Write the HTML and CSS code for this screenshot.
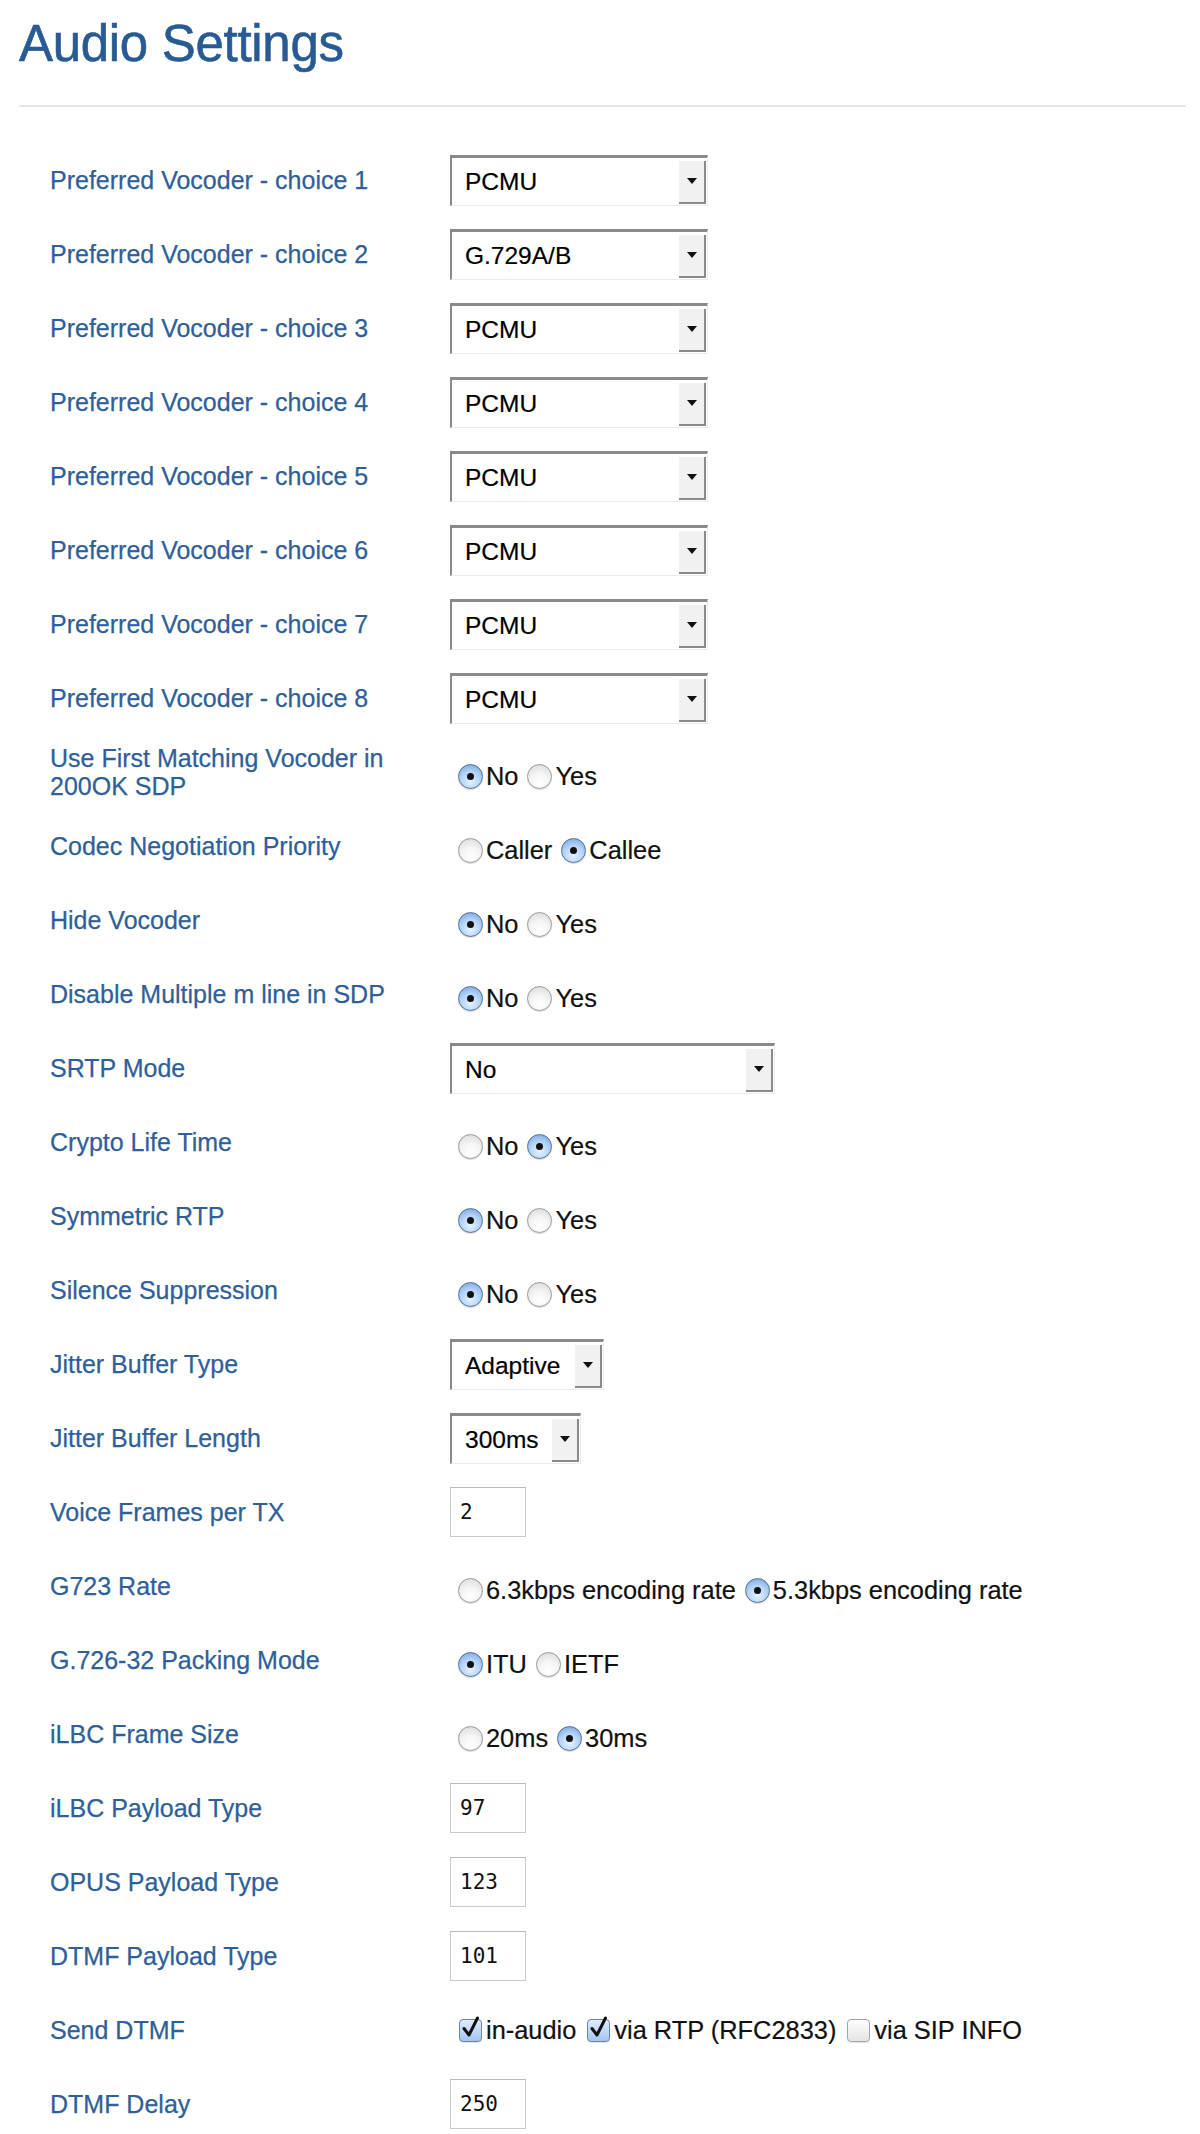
FILE: index.html
```html
<!DOCTYPE html>
<html>
<head>
<meta charset="utf-8">
<title>Audio Settings</title>
<link rel="stylesheet" href="styles.css">
</head>
<body>
<div class="page">
  <h1 class="title">Audio Settings</h1>
  <hr class="sep">
  <div class="form">
    <div class="row"><div class="lbl">Preferred Vocoder - choice 1</div><div class="ctl"><div class="sel w-voc"><span class="val">PCMU</span><span class="btn"><i class="arrow"></i></span></div></div></div>
    <div class="row"><div class="lbl">Preferred Vocoder - choice 2</div><div class="ctl"><div class="sel w-voc"><span class="val">G.729A/B</span><span class="btn"><i class="arrow"></i></span></div></div></div>
    <div class="row"><div class="lbl">Preferred Vocoder - choice 3</div><div class="ctl"><div class="sel w-voc"><span class="val">PCMU</span><span class="btn"><i class="arrow"></i></span></div></div></div>
    <div class="row"><div class="lbl">Preferred Vocoder - choice 4</div><div class="ctl"><div class="sel w-voc"><span class="val">PCMU</span><span class="btn"><i class="arrow"></i></span></div></div></div>
    <div class="row"><div class="lbl">Preferred Vocoder - choice 5</div><div class="ctl"><div class="sel w-voc"><span class="val">PCMU</span><span class="btn"><i class="arrow"></i></span></div></div></div>
    <div class="row"><div class="lbl">Preferred Vocoder - choice 6</div><div class="ctl"><div class="sel w-voc"><span class="val">PCMU</span><span class="btn"><i class="arrow"></i></span></div></div></div>
    <div class="row"><div class="lbl">Preferred Vocoder - choice 7</div><div class="ctl"><div class="sel w-voc"><span class="val">PCMU</span><span class="btn"><i class="arrow"></i></span></div></div></div>
    <div class="row"><div class="lbl">Preferred Vocoder - choice 8</div><div class="ctl"><div class="sel w-voc"><span class="val">PCMU</span><span class="btn"><i class="arrow"></i></span></div></div></div>

    <div class="row"><div class="lbl">Use First Matching Vocoder in 200OK SDP</div><div class="ctl"><div class="opts"><span class="opt"><span class="radio on"></span>No</span><span class="opt"><span class="radio"></span>Yes</span></div></div></div>
    <div class="row"><div class="lbl">Codec Negotiation Priority</div><div class="ctl"><div class="opts"><span class="opt"><span class="radio"></span>Caller</span><span class="opt"><span class="radio on"></span>Callee</span></div></div></div>
    <div class="row"><div class="lbl">Hide Vocoder</div><div class="ctl"><div class="opts"><span class="opt"><span class="radio on"></span>No</span><span class="opt"><span class="radio"></span>Yes</span></div></div></div>
    <div class="row"><div class="lbl">Disable Multiple m line in SDP</div><div class="ctl"><div class="opts"><span class="opt"><span class="radio on"></span>No</span><span class="opt"><span class="radio"></span>Yes</span></div></div></div>

    <div class="row"><div class="lbl">SRTP Mode</div><div class="ctl"><div class="sel w-srtp"><span class="val">No</span><span class="btn"><i class="arrow"></i></span></div></div></div>

    <div class="row"><div class="lbl">Crypto Life Time</div><div class="ctl"><div class="opts"><span class="opt"><span class="radio"></span>No</span><span class="opt"><span class="radio on"></span>Yes</span></div></div></div>
    <div class="row"><div class="lbl">Symmetric RTP</div><div class="ctl"><div class="opts"><span class="opt"><span class="radio on"></span>No</span><span class="opt"><span class="radio"></span>Yes</span></div></div></div>
    <div class="row"><div class="lbl">Silence Suppression</div><div class="ctl"><div class="opts"><span class="opt"><span class="radio on"></span>No</span><span class="opt"><span class="radio"></span>Yes</span></div></div></div>

    <div class="row"><div class="lbl">Jitter Buffer Type</div><div class="ctl"><div class="sel w-jt"><span class="val">Adaptive</span><span class="btn"><i class="arrow"></i></span></div></div></div>
    <div class="row"><div class="lbl">Jitter Buffer Length</div><div class="ctl"><div class="sel w-jl"><span class="val">300ms</span><span class="btn"><i class="arrow"></i></span></div></div></div>

    <div class="row"><div class="lbl">Voice Frames per TX</div><div class="ctl"><div class="inp">2</div></div></div>

    <div class="row"><div class="lbl">G723 Rate</div><div class="ctl"><div class="opts"><span class="opt"><span class="radio"></span>6.3kbps encoding rate</span><span class="opt"><span class="radio on"></span>5.3kbps encoding rate</span></div></div></div>
    <div class="row"><div class="lbl">G.726-32 Packing Mode</div><div class="ctl"><div class="opts"><span class="opt"><span class="radio on"></span>ITU</span><span class="opt"><span class="radio"></span>IETF</span></div></div></div>
    <div class="row"><div class="lbl">iLBC Frame Size</div><div class="ctl"><div class="opts"><span class="opt"><span class="radio"></span>20ms</span><span class="opt"><span class="radio on"></span>30ms</span></div></div></div>

    <div class="row"><div class="lbl">iLBC Payload Type</div><div class="ctl"><div class="inp">97</div></div></div>
    <div class="row"><div class="lbl">OPUS Payload Type</div><div class="ctl"><div class="inp">123</div></div></div>
    <div class="row"><div class="lbl">DTMF Payload Type</div><div class="ctl"><div class="inp">101</div></div></div>

    <div class="row"><div class="lbl">Send DTMF</div><div class="ctl"><div class="opts cbs">
      <span class="opt"><span class="chk on"><svg viewBox="0 0 24 24" width="24" height="24"><path d="M5 12.5 L10 19 L18.5 2" fill="none" stroke="#111" stroke-width="3" stroke-linecap="round" stroke-linejoin="round"/></svg></span>in-audio</span>
      <span class="opt"><span class="chk on"><svg viewBox="0 0 24 24" width="24" height="24"><path d="M5 12.5 L10 19 L18.5 2" fill="none" stroke="#111" stroke-width="3" stroke-linecap="round" stroke-linejoin="round"/></svg></span>via RTP (RFC2833)</span>
      <span class="opt"><span class="chk"></span>via SIP INFO</span>
    </div></div></div>

    <div class="row"><div class="lbl">DTMF Delay</div><div class="ctl"><div class="inp">250</div></div></div>
  </div>
</div>
</body>
</html>
```
FILE: styles.css
```css
html, body {
  margin: 0;
  padding: 0;
  background: #ffffff;
}

body {
  font-family: "Liberation Sans", Arial, Helvetica, sans-serif;
  color: #000;
}

.page {
  padding: 14px 14px 0 19px;
}

.title {
  margin: 0;
  font-size: 51px;
  line-height: 60px;
  font-weight: normal;
  color: #285a93;
  letter-spacing: -0.3px;
  -webkit-text-stroke: 0.6px #285a93;
}

.sep {
  border: 0;
  height: 2px;
  background: #e6e6e6;
  margin: 31px 0 0 0;
}

.form {
  padding: 36px 0 0 31px;
}

.row {
  display: flex;
  align-items: center;
  height: 74px;
}

.lbl {
  width: 400px;
  flex: none;
  box-sizing: border-box;
  padding-right: 12px;
  font-size: 25px;
  line-height: 28px;
  color: #2f5f98;
  -webkit-text-stroke: 0.25px #2f5f98;
}

.ctl {
  display: flex;
  align-items: center;
}

/* select look-alike */
.sel {
  display: flex;
  height: 51px;
  box-sizing: border-box;
  border-top: 3px solid #8a8a8a;
  border-left: 2px solid #8a8a8a;
  border-right: 1px solid #ededed;
  border-bottom: 1px solid #ececec;
  background: #fff;
}

.w-voc { width: 258px; }
.w-srtp { width: 325px; }
.w-jt { width: 154px; }
.w-jl { width: 131px; }

.val {
  flex: 1;
  padding-left: 13px;
  font-size: 24.5px;
  line-height: 47px;
  color: #000;
  white-space: nowrap;
  -webkit-text-stroke: 0.2px #000;
}

.btn {
  flex: none;
  width: 25px;
  margin: 3px 1px 1px 0;
  background: #f1f1f1;
  border-right: 2px solid #8a8a8a;
  border-bottom: 2px solid #8a8a8a;
  display: flex;
  align-items: center;
  justify-content: center;
}

.arrow {
  width: 0;
  height: 0;
  border-left: 5px solid transparent;
  border-right: 5px solid transparent;
  border-top: 6px solid #111;
}

/* radios / checkboxes */
.opts {
  display: flex;
  align-items: center;
  padding-left: 8px;
  padding-top: 8px;
  font-size: 25.4px;
  line-height: 28px;
  color: #111;
  -webkit-text-stroke: 0.2px #111;
}

.opts.cbs {
  padding-top: 0;
  padding-left: 9px;
}

.opt {
  display: flex;
  align-items: center;
  white-space: nowrap;
}

.opt + .opt {
  margin-left: 9px;
}

.cbs .opt + .opt {
  margin-left: 11px;
}

.radio {
  flex: none;
  width: 25px;
  height: 25px;
  box-sizing: border-box;
  border-radius: 50%;
  border: 1px solid #9a9a9a;
  background: radial-gradient(circle at 50% 75%, #ffffff 0%, #f4f4f4 45%, #d6d6d6 100%);
  box-shadow: 0 1px 1px rgba(0, 0, 0, 0.15);
  margin-right: 3px;
  display: flex;
  align-items: center;
  justify-content: center;
}

.radio.on {
  border-color: #52729c;
  background: radial-gradient(circle at 50% 70%, #e6f2ff 0%, #b2d2f6 50%, #6c9cd6 100%);
}

.radio.on::after {
  content: "";
  width: 7px;
  height: 7px;
  border-radius: 50%;
  background: #111;
}

.chk {
  flex: none;
  width: 23px;
  height: 23px;
  box-sizing: border-box;
  border-radius: 4px;
  border: 1px solid #a3a3a3;
  background: linear-gradient(#ffffff, #e4e4e4);
  box-shadow: 0 1px 1px rgba(0, 0, 0, 0.12);
  margin-right: 4px;
  display: flex;
  align-items: center;
  justify-content: center;
  overflow: visible;
}

.chk.on {
  border-color: #6a86ad;
  background: linear-gradient(#e0edfc, #a2c6f1);
}

.chk svg {
  flex: none;
  margin-top: -5px;
  margin-left: 1px;
  overflow: visible;
}

/* text inputs */
.inp {
  width: 76px;
  height: 50px;
  box-sizing: border-box;
  border: 1px solid #cacaca;
  border-top-color: #b9b9b9;
  padding-left: 9px;
  display: flex;
  align-items: center;
  font-family: "DejaVu Sans Mono", "Liberation Mono", monospace;
  font-size: 21px;
  color: #111;
  background: #fff;
}
```
